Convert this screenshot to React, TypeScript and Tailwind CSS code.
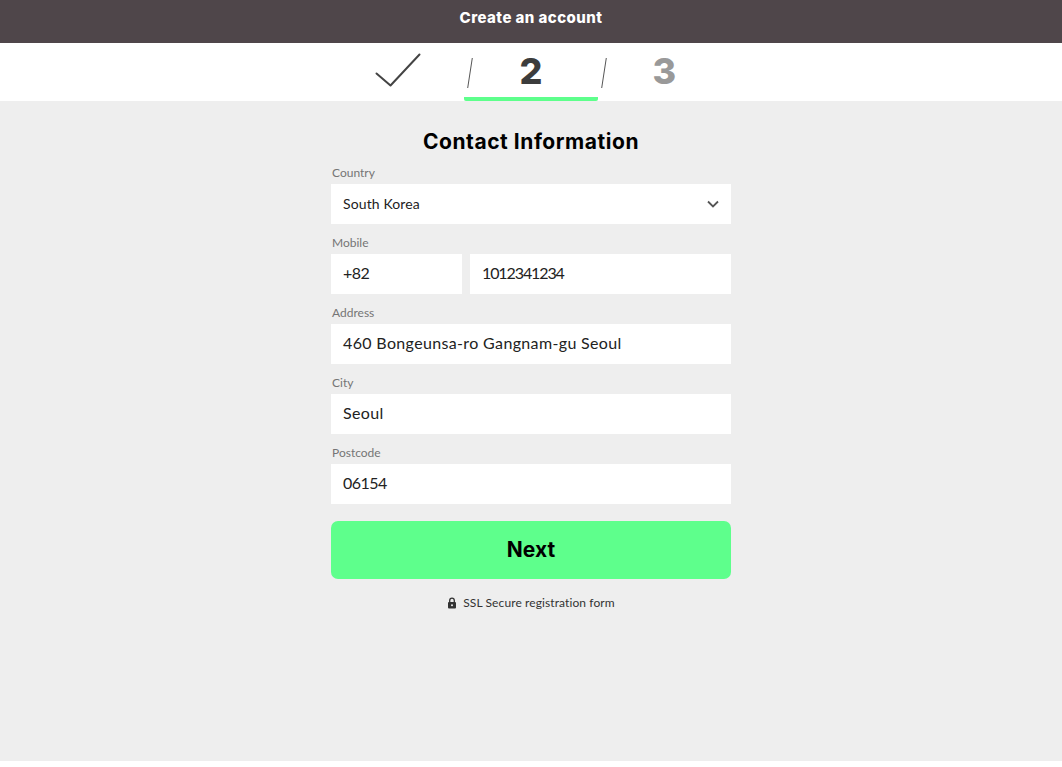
const sans = "font-['Lato','Liberation_Sans',sans-serif]";
const head = "font-['Inter','Liberation_Sans',sans-serif]";

function Slash() {
  return (
    <svg className="absolute left-[3px] top-[15px]" width="6" height="30" viewBox="0 0 6 30" fill="none">
      <path d="M5.3 0 L0.7 30" stroke="#555" strokeWidth="1" />
    </svg>
  );
}

function Field({ label, value, digits = false }: { label: string; value: string; digits?: boolean }) {
  return (
    <div className="flex flex-col">
      <label className="h-[24px] pt-[5px] pl-px text-[12px] leading-[16px] text-[#757575]">{label}</label>
      <div className={`flex h-[40px] items-center bg-white px-3 pb-[2px] text-[16px] text-[#222] ${digits ? "tracking-[-0.5px]" : "tracking-[0.35px]"}`}>{value}</div>
    </div>
  );
}

export default function App() {
  return (
    <div className={`flex h-[767px] flex-col bg-white ${sans}`}>
      <header className={`flex h-[43px] items-start justify-center bg-[#4f464a] pt-[8px] text-[15px] leading-[20px] font-extrabold tracking-[0.45px] text-white ${head}`}>
        Create an account
      </header>
      <div className="flex h-[58px] justify-center bg-white">
        <div className="grid h-[58px] w-[400px] grid-cols-3">
          <div className="flex items-start justify-center pt-[10px]">
            <svg className="ml-[1px]" width="46" height="34" viewBox="0 0 46 34" fill="none">
              <path d="M1.5 20.5 L15.5 32.5 L44.5 1.5" stroke="#444" strokeWidth="2" strokeLinecap="round" strokeLinejoin="round" />
            </svg>
          </div>
          <div className="relative flex h-[58px] items-start justify-center rounded-b-[2px] border-b-[4px] border-[#5eff8c]">
            <Slash />
            <span className={`h-[54px] text-[36px] leading-[56px] font-extrabold text-[#3c3c3c] ${head}`}>2</span>
          </div>
          <div className="relative flex h-[58px] items-start justify-center">
            <Slash />
            <span className={`h-[54px] text-[36px] leading-[56px] font-extrabold text-[#999] ${head}`}>3</span>
          </div>
        </div>
      </div>
      <main className="flex h-[660px] flex-col items-center bg-[#eeeeee]">
        <div className="flex w-[400px] flex-col">
          <h1 className={`mt-[26px] h-[33px] text-center text-[21px] leading-[29px] font-bold tracking-[0.55px] text-black ${head}`}>Contact Information</h1>
          <div className="flex flex-col">
            <label className="h-[24px] pt-[5px] pl-px text-[12px] leading-[16px] text-[#757575]">Country</label>
            <div className="flex h-[40px] items-center justify-between bg-white pr-[11px] pb-[1px] pl-3 text-[14px] tracking-[0.12px] text-[#222]">
              <span>South Korea</span>
              <svg width="14" height="14" viewBox="0 0 14 14" fill="none">
                <path d="M2 4.5 L7 9.5 L12 4.5" stroke="#555" strokeWidth="1.8" />
              </svg>
            </div>
          </div>
          <div className="mt-[6px] grid grid-cols-[131px_261px] gap-x-2">
            <div className="col-span-2 h-[24px] pt-[5px] pl-px text-[12px] leading-[16px] text-[#757575]">Mobile</div>
            <div className="flex h-[40px] items-center bg-white px-3 pb-[2px] text-[16px] tracking-[-0.5px] text-[#222]">+82</div>
            <div className="flex h-[40px] items-center bg-white px-3 pb-[2px] text-[16px] tracking-[-1.1px] text-[#222]">1012341234</div>
          </div>
          <div className="mt-[6px]"><Field label="Address" value="460 Bongeunsa-ro Gangnam-gu Seoul" /></div>
          <div className="mt-[6px]"><Field label="City" value="Seoul" /></div>
          <div className="mt-[6px]"><Field label="Postcode" value="06154" digits /></div>
          <button className={`mt-[17px] flex h-[58px] items-center justify-center rounded-[7px] bg-[#5eff8c] text-[21px] font-bold text-black ${head}`}>Next</button>
          <div className="mt-[16px] flex items-center justify-center gap-[6px] text-[12px] leading-[16px] tracking-[0.1px] text-[#333]">
            <svg width="10" height="12" viewBox="0 0 10 12" fill="none">
              <path d="M2.7 5V3.4a2.3 2.3 0 0 1 4.6 0V5" stroke="#333" strokeWidth="1.3" />
              <rect x="1" y="5" width="8" height="6.5" rx="1" fill="#333" />
              <circle cx="5" cy="8.2" r="1" fill="#eee" />
            </svg>
            <span>SSL Secure registration form</span>
          </div>
        </div>
      </main>
    </div>
  );
}
